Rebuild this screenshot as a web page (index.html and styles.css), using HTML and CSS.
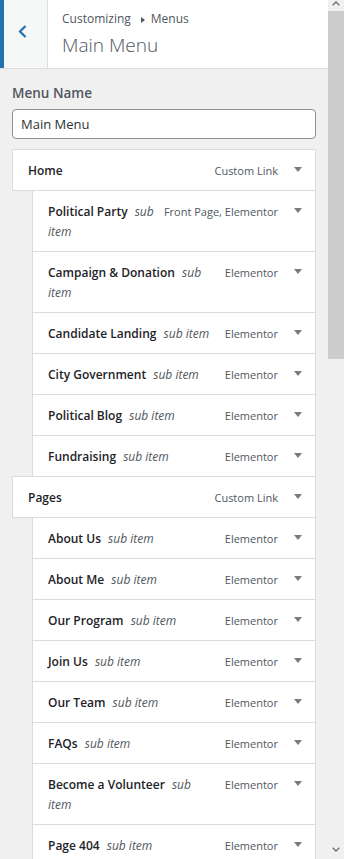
FILE: index.html
```html
<!DOCTYPE html>
<html lang="en">
<head>
<meta charset="utf-8">
<title>Customizing Menus</title>
<link rel="stylesheet" href="styles.css">
</head>
<body>
<div class="app">
  <div class="panel">
    <header class="head">
      <button class="back" aria-label="Back">
        <svg width="9" height="13" viewBox="0 0 9 13"><path d="M7.5 1 L2 6.5 L7.5 12" fill="none" stroke="#2271b1" stroke-width="2.2"/></svg>
      </button>
      <div class="titles">
        <div class="crumb">Customizing<span class="sep"></span>Menus</div>
        <h2 class="name">Main Menu</h2>
      </div>
    </header>
    <div class="content">
      <label class="label" for="menu-name">Menu Name</label>
      <input class="field" id="menu-name" type="text" value="Main Menu">
      <ul class="menu">
        <li class="item"><span class="title"><b>Home</b></span><span class="type">Custom Link</span><span class="toggle"></span></li>
        <li class="item sub"><span class="title"><b>Political Party</b> <i>sub item</i></span><span class="type">Front Page, Elementor</span><span class="toggle"></span></li>
        <li class="item sub"><span class="title"><b>Campaign &amp; Donation</b> <i>sub item</i></span><span class="type">Elementor</span><span class="toggle"></span></li>
        <li class="item sub"><span class="title"><b>Candidate Landing</b> <i>sub item</i></span><span class="type">Elementor</span><span class="toggle"></span></li>
        <li class="item sub"><span class="title"><b>City Government</b> <i>sub item</i></span><span class="type">Elementor</span><span class="toggle"></span></li>
        <li class="item sub"><span class="title"><b>Political Blog</b> <i>sub item</i></span><span class="type">Elementor</span><span class="toggle"></span></li>
        <li class="item sub"><span class="title"><b>Fundraising</b> <i>sub item</i></span><span class="type">Elementor</span><span class="toggle"></span></li>
        <li class="item"><span class="title"><b>Pages</b></span><span class="type">Custom Link</span><span class="toggle"></span></li>
        <li class="item sub"><span class="title"><b>About Us</b> <i>sub item</i></span><span class="type">Elementor</span><span class="toggle"></span></li>
        <li class="item sub"><span class="title"><b>About Me</b> <i>sub item</i></span><span class="type">Elementor</span><span class="toggle"></span></li>
        <li class="item sub"><span class="title"><b>Our Program</b> <i>sub item</i></span><span class="type">Elementor</span><span class="toggle"></span></li>
        <li class="item sub"><span class="title"><b>Join Us</b> <i>sub item</i></span><span class="type">Elementor</span><span class="toggle"></span></li>
        <li class="item sub"><span class="title"><b>Our Team</b> <i>sub item</i></span><span class="type">Elementor</span><span class="toggle"></span></li>
        <li class="item sub"><span class="title"><b>FAQs</b> <i>sub item</i></span><span class="type">Elementor</span><span class="toggle"></span></li>
        <li class="item sub"><span class="title"><b>Become a Volunteer</b> <i>sub item</i></span><span class="type">Elementor</span><span class="toggle"></span></li>
        <li class="item sub"><span class="title"><b>Page 404</b> <i>sub item</i></span><span class="type">Elementor</span><span class="toggle"></span></li>
      </ul>
    </div>
  </div>
  <div class="scrollbar" aria-hidden="true">
    <div class="sb-btn sb-up"><svg width="8" height="5" viewBox="0 0 8 5"><path d="M0.7 4.3 L4 1 L7.3 4.3" fill="none" stroke="#6e6e6e" stroke-width="1.3"/></svg></div>
    <div class="sb-thumb"></div>
    <div class="sb-track"></div>
    <div class="sb-btn sb-down"><svg width="8" height="5" viewBox="0 0 8 5"><path d="M0.7 0.7 L4 4 L7.3 0.7" fill="none" stroke="#6e6e6e" stroke-width="1.3"/></svg></div>
  </div>
</div>
</body>
</html>
```

FILE: styles.css
```css
* { box-sizing: border-box; }
html, body { margin: 0; padding: 0; }
body {
  width: 344px;
  height: 859px;
  overflow: hidden;
  font-family: "Open Sans", "Noto Sans", sans-serif;
  background: #f0f0f1;
}
.app { display: flex; height: 859px; }
.panel { width: 328px; flex: none; background: #f0f0f1; overflow: hidden; }

.head {
  display: flex;
  height: 69px;
  background: #fff;
  border-bottom: 1px solid #dcdcde;
}
.back {
  width: 48px;
  flex: none;
  margin: 0;
  padding: 0 0 5px 14px;
  border: 0;
  border-left: 4px solid #2271b1;
  border-right: 1px solid #dcdcde;
  background: #f6f7f7;
  display: flex;
  align-items: center;
}
.back svg { display: block; }
.titles { padding: 9px 0 0 14px; }
.crumb {
  font-size: 12px;
  line-height: 20px;
  color: #50575e;
  display: flex;
  align-items: center;
}
.sep {
  width: 0; height: 0;
  border-left: 4px solid #50575e;
  border-top: 3px solid transparent;
  border-bottom: 3px solid transparent;
  margin: 1px 6px 0 10px;
}
.name {
  margin: 3px 0 0;
  font-size: 19px;
  line-height: 26px;
  font-weight: 300;
  color: #50575e;
}

.content { padding: 14px 12px 0; }
.label {
  display: block;
  font-size: 13.5px;
  line-height: 20px;
  font-weight: 600;
  color: #50575e;
  margin-bottom: 6px;
}
.field {
  display: block;
  width: 304px;
  height: 30px;
  margin: 0;
  padding: 0 8px;
  border: 1px solid #8c8f94;
  border-radius: 4px;
  background: #fff;
  font-family: "Open Sans", "Noto Sans", sans-serif;
  font-size: 13px;
  color: #2c3338;
}

.menu { list-style: none; margin: 10px 0 0; padding: 0; }
.item {
  display: flex;
  align-items: flex-start;
  background: #fff;
  border: 1px solid #dcdcde;
  margin-top: -1px;
  padding: 11px 13px 9px 15px;
  line-height: 20px;
}
.item:first-child { margin-top: 0; }
.sub { margin-left: 20px; }
.title { flex: 1; min-width: 0; font-size: 12px; color: #1d2327; }
.title b { font-weight: 600; }
.title i { font-style: italic; color: #50575e; padding-left: 4px; }
.type {
  flex: none;
  margin-left: 9px;
  font-size: 11px;
  color: #50575e;
  white-space: nowrap;
}
.toggle {
  flex: none;
  width: 8px;
  height: 20px;
  margin-left: 16px;
  padding-top: 6px;
}
.toggle::before {
  content: "";
  display: block;
  width: 0; height: 0;
  border-left: 4px solid transparent;
  border-right: 4px solid transparent;
  border-top: 5px solid #787c82;
}

.scrollbar {
  width: 16px;
  flex: none;
  display: flex;
  flex-direction: column;
  background: #f0f0f0;
}
.sb-btn { display: flex; justify-content: center; flex: none; }
.sb-up { height: 11px; padding-top: 1px; align-items: flex-start; }
.sb-thumb { height: 348px; background: #cdcdcd; flex: none; }
.sb-track { flex: 1; }
.sb-down { height: 16px; padding-top: 4px; align-items: flex-start; }
.sb-btn svg { display: block; }
```
